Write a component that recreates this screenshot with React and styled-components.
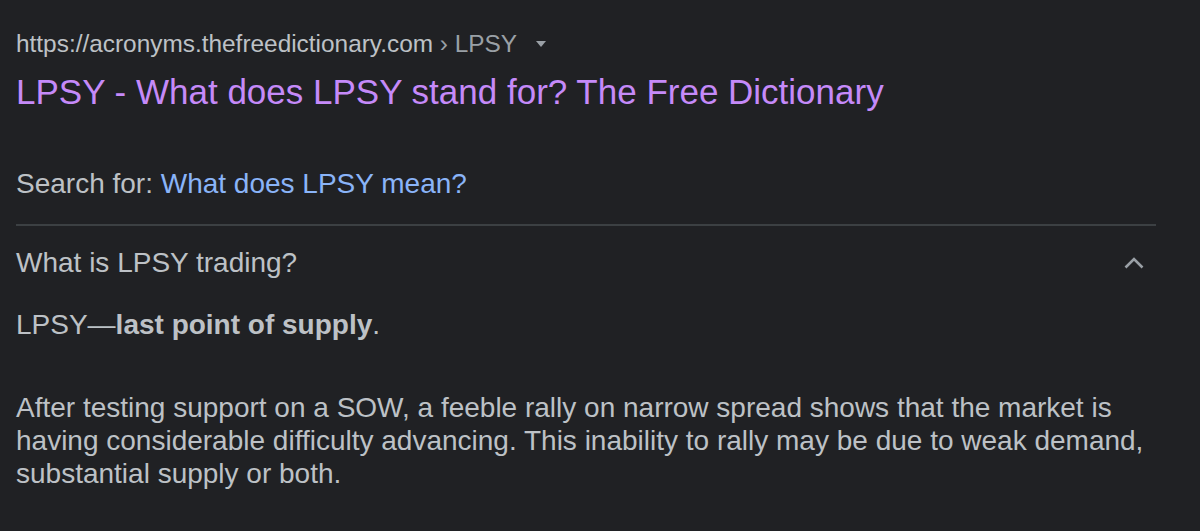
import React from "react"
import styled, { createGlobalStyle } from "styled-components"

const Global = createGlobalStyle`
  html, body {
    margin: 0;
    padding: 0;
    background: #202124;
  }
  body {
    font-family: "Liberation Sans", Arial, sans-serif;
  }
`

export default function App() {
  return (
    <>
      <Global />
      <S.Page>
        <S.Result>
          <S.Cite>
            https://acronyms.thefreedictionary.com<S.Crumb> › LPSY</S.Crumb>
            <S.Caret />
          </S.Cite>
          <S.Title>LPSY - What does LPSY stand for? The Free Dictionary</S.Title>
          <S.SearchFor>
            Search for: <S.Link>What does LPSY mean?</S.Link>
          </S.SearchFor>
        </S.Result>
        <S.Divider />
        <S.Question>
          <span>What is LPSY trading?</span>
          <svg width="20" height="14" viewBox="0 0 20 14">
            <path d="M1.5 11.5 L10 3 L18.5 11.5" fill="none" stroke="#9aa0a6" strokeWidth="2.6" />
          </svg>
        </S.Question>
        <S.Answer>
          <S.Para>
            LPSY—<b>last point of supply</b>.
          </S.Para>
          <S.Para>
            After testing support on a SOW, a feeble rally on narrow spread shows that the market is
            having considerable difficulty advancing. This inability to rally may be due to weak demand,
            substantial supply or both.
          </S.Para>
        </S.Answer>
      </S.Page>
    </>
  )
}

const S = {
  Page: styled.div`
    width: 1140px;
    padding: 0 44px 0 16px;
    color: #bdc1c6;
  `,
  Result: styled.div`
    padding-top: 30px;
  `,
  Cite: styled.div`
    display: flex;
    align-items: center;
    font-size: 24.4px;
    line-height: 28px;
    color: #bdc1c6;
  `,
  Crumb: styled.span`
    color: #9aa0a6;
    white-space: pre;
  `,
  Caret: styled.span`
    width: 0;
    height: 0;
    margin-left: 19px;
    border-left: 5px solid transparent;
    border-right: 5px solid transparent;
    border-top: 6px solid #9aa0a6;
  `,
  Title: styled.h3`
    margin: 12px 0 0;
    font-weight: 400;
    font-size: 35px;
    line-height: 44px;
    color: #c58af9;
  `,
  SearchFor: styled.div`
    margin-top: 52px;
    font-size: 28px;
    line-height: 36px;
    color: #bdc1c6;
  `,
  Link: styled.span`
    color: #8ab4f8;
  `,
  Divider: styled.div`
    margin-top: 22px;
    height: 2px;
    background: #3c4043;
  `,
  Question: styled.div`
    display: flex;
    align-items: center;
    justify-content: space-between;
    height: 74px;
    padding-right: 12px;
    font-size: 28px;
    color: #bdc1c6;
  `,
  Answer: styled.div`
    padding-top: 8px;
    font-size: 28px;
    line-height: 33px;
    color: #bdc1c6;
  `,
  Para: styled.p`
    margin: 0 0 50px;
    b {
      font-weight: 700;
    }
  `,
}
